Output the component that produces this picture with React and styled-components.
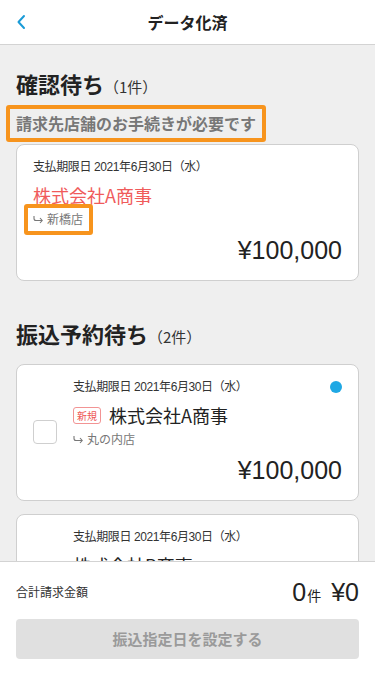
import React from 'react';
import styled, { createGlobalStyle } from 'styled-components';

const GlobalStyle = createGlobalStyle`
  html, body {
    margin: 0;
    padding: 0;
    background: #efefef;
  }
  * {
    box-sizing: border-box;
  }
  body {
    font-family: 'Liberation Sans', 'Noto Sans CJK JP', sans-serif;
    color: #222;
  }
`;

const Screen = styled.div`
  width: 375px;
  height: 675px;
  display: flex;
  flex-direction: column;
  background: #efefef;
  overflow: hidden;
`;

const Header = styled.header`
  height: 45px;
  flex-shrink: 0;
  background: #fff;
  border-bottom: 1px solid #d3d3d3;
  display: grid;
  grid-template-columns: 60px 1fr 60px;
  align-items: center;

  & > h1 {
    margin: 0;
    text-align: center;
    font-size: 16px;
    font-weight: 700;
    color: #222;
    font-family: 'Noto Sans CJK JP', sans-serif;
  }
`;

const BackButton = styled.button`
  border: 0;
  background: none;
  padding: 0 0 0 16px;
  display: flex;
  align-items: center;
  height: 44px;
`;

const Body = styled.main`
  flex: 1;
  overflow: hidden;
  padding: 23px 16px 0;
  display: flex;
  flex-direction: column;
  align-items: stretch;
`;

const SectionTitle = styled.h2`
  margin: ${(p) => p.$top || 0}px 0 0;
  height: 30px;
  font-family: 'Noto Sans CJK JP', sans-serif;
  font-size: 22px;
  font-weight: 700;
  line-height: 30px;
  color: #222;
  display: flex;
  align-items: baseline;

  & > small {
    font-size: 15px;
    line-height: 20px;
    font-weight: 400;
    color: #333;
  }
`;

const Notice = styled.div`
  align-self: flex-start;
  margin: 7px 0 2px -10px;
  padding: 4px 6px;
  border: 4px solid #f7941d;
  border-radius: 3px;
  font-family: 'Noto Sans CJK JP', sans-serif;
  font-size: 16px;
  font-weight: 700;
  line-height: 21px;
  color: #777;
`;

const Card = styled.div`
  position: relative;
  flex-shrink: 0;
  background: #fff;
  border: 1px solid #cfcfcf;
  border-radius: 8px;
  padding: 13px 16px 14px;
  margin-top: ${(p) => p.$gap || 0}px;
  display: flex;
  align-items: center;
  gap: 16px;
`;

const CardContent = styled.div`
  flex: 1;
  display: flex;
  flex-direction: column;
`;

const Due = styled.div`
  font-size: 12px;
  line-height: 18px;
  letter-spacing: -0.4px;
  color: #333;
`;

const NameRow = styled.div`
  margin-top: 7px;
  display: flex;
  align-items: center;
  gap: 8px;
`;

const Company = styled.div`
  font-family: 'Noto Sans CJK JP', sans-serif;
  font-size: 18px;
  line-height: 24px;
  color: ${(p) => (p.$alert ? '#f05b5b' : '#222')};
`;

const NewTag = styled.span`
  font-family: 'Noto Sans CJK JP', sans-serif;
  font-size: 10px;
  line-height: 15px;
  padding: 0 3px;
  color: #ee5656;
  border: 1px solid #f29494;
  border-radius: 3px;
`;

const Branch = styled.div`
  position: relative;
  align-self: flex-start;
  margin-top: 3px;
  font-family: 'Noto Sans CJK JP', sans-serif;
  font-size: 12px;
  line-height: 18px;
  color: #777;
  display: flex;
  align-items: center;
  gap: 4px;

  ${(p) =>
    p.$marked &&
    `
    &::after {
      content: '';
      position: absolute;
      top: -6px;
      bottom: -7px;
      left: -9px;
      right: -10px;
      border: 4px solid #f7941d;
      border-radius: 3px;
    }
  `}
`;

const Amount = styled.div`
  margin-top: 6px;
  text-align: right;
  font-size: 25px;
  line-height: 32px;
  color: #222;
`;

const Check = styled.span`
  width: 24px;
  height: 24px;
  flex-shrink: 0;
  border: 1px solid #cfcfcf;
  border-radius: 4px;
  background: #fff;
`;

const Dot = styled.span`
  position: absolute;
  top: 16px;
  right: 16px;
  width: 12px;
  height: 12px;
  border-radius: 50%;
  background: #1fa8e4;
`;

const Footer = styled.footer`
  flex-shrink: 0;
  background: #fff;
  border-top: 1px solid #d3d3d3;
  padding: 14px 16px 16px;
`;

const TotalRow = styled.div`
  display: flex;
  align-items: center;
  justify-content: space-between;
  height: 32px;

  & > span {
    font-family: 'Noto Sans CJK JP', sans-serif;
    font-size: 12px;
    line-height: 18px;
    color: #333;
  }
`;

const Total = styled.div`
  display: flex;
  align-items: baseline;
  font-size: 25px;
  line-height: 32px;
  color: #222;

  & > small {
    font-family: 'Noto Sans CJK JP', sans-serif;
    font-size: 14px;
    line-height: 20px;
    margin: 0 10px 0 1px;
  }
`;

const SubmitButton = styled.button`
  margin-top: 11px;
  width: 100%;
  height: 40px;
  padding: 0;
  border: 0;
  border-radius: 4px;
  background: #e0e0e0;
  color: #9a9a9a;
  font-family: 'Noto Sans CJK JP', sans-serif;
  font-size: 15px;
  line-height: 22px;
  font-weight: 700;
`;

const HookArrow = () => (
  <svg width="10" height="9" viewBox="0 0 10 9" fill="none" stroke="#777" strokeWidth="1.1">
    <path d="M1 1v2.5a2 2 0 0 0 2 2h6" />
    <path d="M7 3l2.2 2.5L7 8" />
  </svg>
);

const BillCard = ({ gap, selectable, isNew, alert, branch, marked, company, unread }) => (
  <Card $gap={gap}>
    {selectable && <Check />}
    <CardContent>
      <Due>支払期限日 2021年6月30日（水）</Due>
      <NameRow>
        {isNew && <NewTag>新規</NewTag>}
        <Company $alert={alert}>{company}</Company>
      </NameRow>
      <Branch $marked={marked}>
        <HookArrow />
        {branch}
      </Branch>
      <Amount>¥100,000</Amount>
    </CardContent>
    {unread && <Dot />}
  </Card>
);

export default function App() {
  return (
    <Screen>
      <GlobalStyle />
      <Header>
        <BackButton aria-label="戻る">
          <svg width="10" height="16" viewBox="0 0 10 16" fill="none">
            <path d="M8 2L2.5 8L8 14" stroke="#1a9bd7" strokeWidth="2" strokeLinecap="round" strokeLinejoin="round" />
          </svg>
        </BackButton>
        <h1>データ化済</h1>
        <div />
      </Header>
      <Body>
        <SectionTitle>
          確認待ち<small>（1件）</small>
        </SectionTitle>
        <Notice>請求先店舗のお手続きが必要です</Notice>
        <BillCard alert marked company="株式会社A商事" branch="新橋店" />

        <SectionTitle $top={37}>
          振込予約待ち<small>（2件）</small>
        </SectionTitle>
        <BillCard gap={16} selectable isNew unread company="株式会社A商事" branch="丸の内店" />
        <BillCard gap={13} selectable company="株式会社B商事" branch="丸の内店" />
      </Body>
      <Footer>
        <TotalRow>
          <span>合計請求金額</span>
          <Total>
            0<small>件</small>¥0
          </Total>
        </TotalRow>
        <SubmitButton disabled>振込指定日を設定する</SubmitButton>
      </Footer>
    </Screen>
  );
}
